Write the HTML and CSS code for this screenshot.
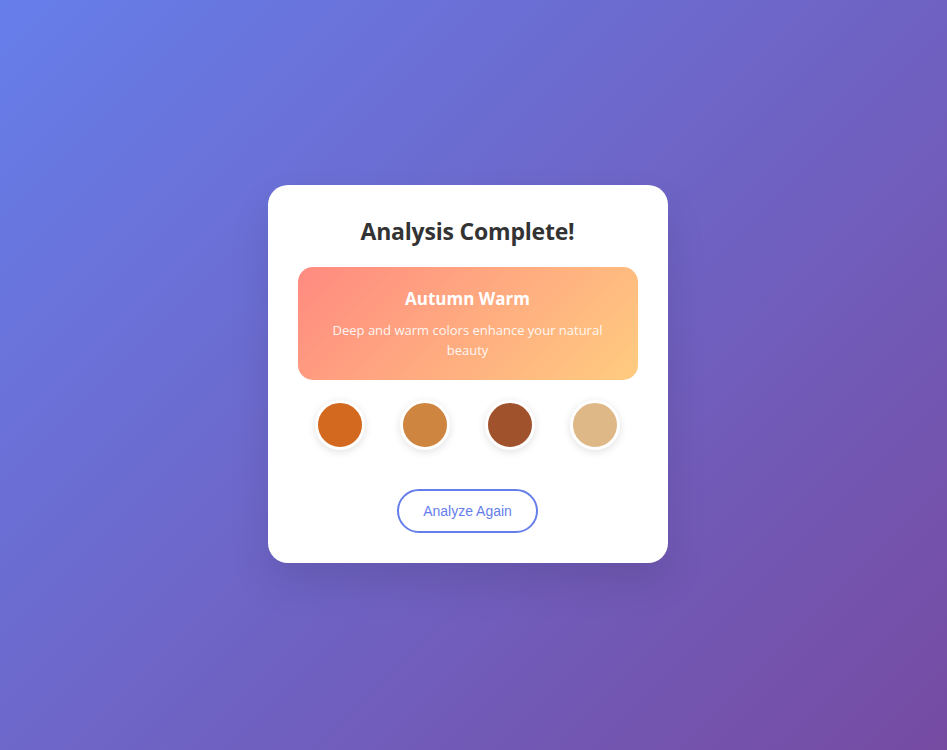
FILE: index.html
```html
<!DOCTYPE html>
<html lang="en">
<head>
<meta charset="utf-8">
<title>Analysis Complete</title>
<link rel="stylesheet" href="styles.css">
</head>
<body>
  <div class="card">
    <h2 class="title">Analysis Complete!</h2>
    <div class="season">
      <h3 class="season-name">Autumn Warm</h3>
      <p class="season-desc">Deep and warm colors enhance your natural beauty</p>
    </div>
    <div class="palette">
      <div class="swatch swatch-1"></div>
      <div class="swatch swatch-2"></div>
      <div class="swatch swatch-3"></div>
      <div class="swatch swatch-4"></div>
    </div>
    <button class="again">Analyze Again</button>
  </div>
</body>
</html>
```
FILE: styles.css
```css
* { box-sizing: border-box; }
html, body { margin: 0; padding: 0; }
body {
  font-family: "Open Sans", "Noto Sans", sans-serif;
  min-height: 100vh;
  padding: 0 12px 2px 0;
  background: linear-gradient(135deg, #667eea 0%, #764ba2 100%);
  display: flex;
  align-items: center;
  justify-content: center;
}
.card {
  width: 400px;
  background: #fff;
  border-radius: 20px;
  padding: 30px;
  text-align: center;
  box-shadow: 0 20px 40px rgba(0,0,0,0.1);
}
.title {
  margin: 0 0 20px;
  font-size: 23px;
  line-height: 32px;
  font-weight: 700;
  color: #333;
  letter-spacing: -0.2px;
}
.season {
  background: linear-gradient(135deg, #ff8a80 0%, #ffcc80 100%);
  border-radius: 15px;
  padding: 20px;
  color: #fff;
}
.season-name {
  margin: 0 0 10px;
  font-size: 17px;
  line-height: 24px;
  font-weight: 700;
}
.season-desc {
  margin: 0;
  font-size: 13px;
  line-height: 19.5px;
  opacity: 0.9;
}
.palette {
  display: flex;
  justify-content: space-around;
  margin: 20px 0;
}
.swatch {
  width: 50px;
  height: 50px;
  border-radius: 50%;
  border: 3px solid #fff;
  box-shadow: 0 2px 8px rgba(0,0,0,0.12);
}
.swatch-1 { background: #d2691e; }
.swatch-2 { background: #cd853f; }
.swatch-3 { background: #a0522d; }
.swatch-4 { background: #deb887; }
.again {
  margin-top: 19px;
  background: transparent;
  border: 2px solid #667eea;
  color: #667eea;
  border-radius: 25px;
  padding: 12px 24px;
  font-family: "Liberation Sans", Arial, sans-serif;
  font-size: 14px;
  line-height: 16px;
  cursor: pointer;
}
```
